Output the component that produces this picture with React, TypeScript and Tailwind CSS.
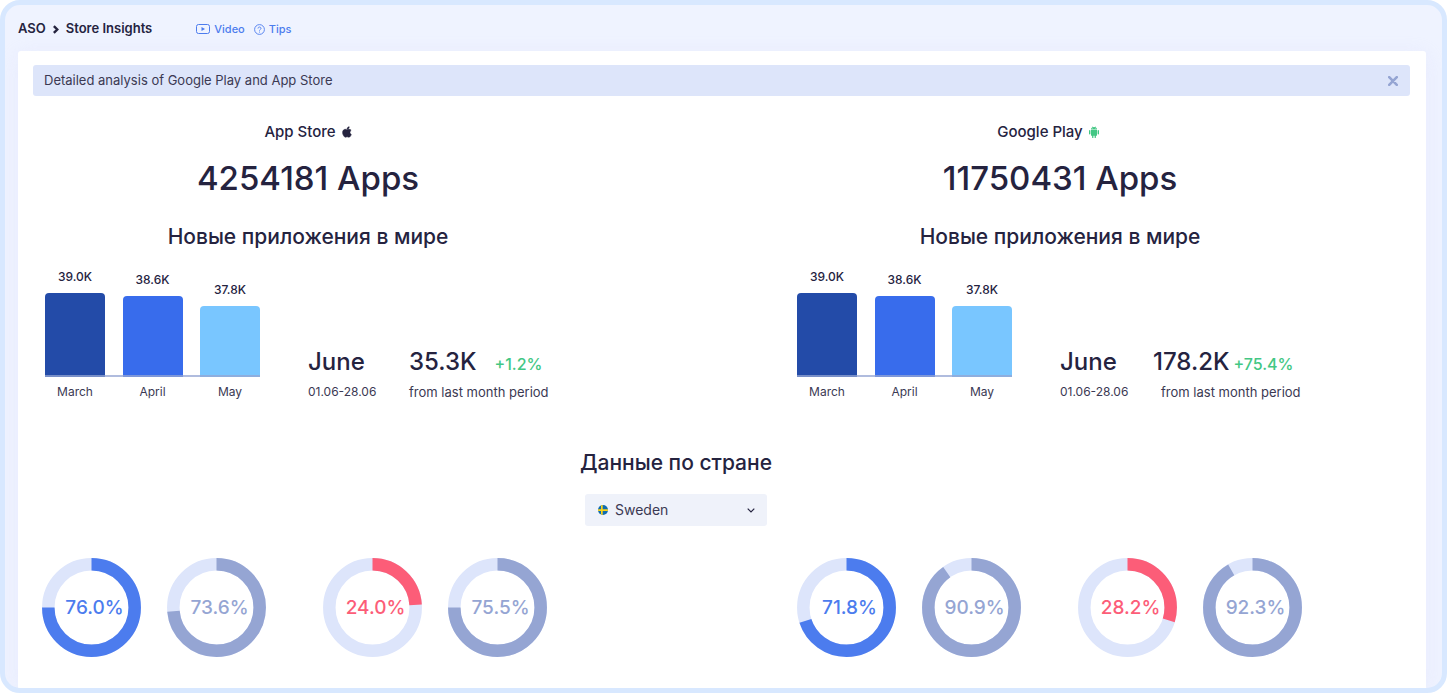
import React from "react";

const MONTHS = [
  { name: "March", value: "39.0K", bar: "h-[84px] bg-[#234ba8]" },
  { name: "April", value: "38.6K", bar: "h-[81px] bg-[#386cec]" },
  { name: "May", value: "37.8K", bar: "h-[71px] bg-[#79c6ff]" },
];

const AppleIcon = () => (
  <svg viewBox="0 0 384 512" className="h-3 w-[10px]" fill="currentColor" aria-hidden="true">
    <path d="M319 269c0-37 16-64 50-84-19-27-47-42-85-45-36-3-75 21-89 21-15 0-50-20-77-20C62 142 4 186 4 275c0 26 5 53 14 81 13 36 58 125 105 123 25-1 42-18 75-18 31 0 48 18 76 18 48-1 89-81 101-118-64-30-56-89-56-92zM262 104c27-32 24-61 23-72-23 1-51 16-66 34-17 20-27 44-25 71 26 2 49-11 68-33z" stroke="currentColor" strokeWidth="24" />
  </svg>
);

const AndroidIcon = () => (
  <svg viewBox="0 0 20 24" className="h-3 w-[10px] text-[#43c784]" fill="currentColor" aria-hidden="true">
    <path d="M4 8h12v10.500a1 1 0 0 1-1 1h-1.200V23a1.300 1.300 0 0 1-2.600 0v-3.500H8.800V23a1.300 1.300 0 0 1-2.600 0v-3.500H5a1 1 0 0 1-1-1z" />
    <path d="M4 7.200C4 5 5 3.600 6.800 2.700L5.700.9l.6-.4 1.200 1.900a7 7 0 0 1 5 0L13.700.5l.6.4-1.100 1.800C15 3.600 16 5 16 7.200zM7.300 5.400a.6.6 0 1 0 0-1.200.6.6 0 0 0 0 1.200zm5.400 0a.6.6 0 1 0 0-1.200.6.6 0 0 0 0 1.200z" fillRule="evenodd" />
    <rect x="0" y="8" width="2.800" height="9" rx="1.400" />
    <rect x="17.200" y="8" width="2.800" height="9" rx="1.400" />
  </svg>
);

const STORES = [
  {
    name: "App Store",
    icon: <AppleIcon />,
    total: "4254181 Apps",
    current: "35.3K",
    growth: "+1.2%",
    headingClass: "",
    numberClass: "gap-[18px]",
    rings: [
      { value: "76.0%", arc: 75, color: "text-[#4c7cee]" },
      { value: "73.6%", arc: 73.6, color: "text-[#95a5d3]" },
      { value: "24.0%", arc: 24, color: "text-[#fc5d78]" },
      { value: "75.5%", arc: 75, color: "text-[#95a5d3]" },
    ],
  },
  {
    name: "Google Play",
    icon: <AndroidIcon />,
    total: "11750431 Apps",
    current: "178.2K",
    growth: "+75.4%",
    headingClass: "pr-6",
    numberClass: "-ml-2 gap-1",
    rings: [
      { value: "71.8%", arc: 70, color: "text-[#4c7cee]" },
      { value: "90.9%", arc: 90.3, color: "text-[#95a5d3]" },
      { value: "28.2%", arc: 29.8, color: "text-[#fc5d78]" },
      { value: "92.3%", arc: 91.8, color: "text-[#95a5d3]" },
    ],
  },
];

type Store = (typeof STORES)[number];

const Header = () => (
  <header className="flex h-[46px] items-center px-[13px] pt-0.5 text-[13px] font-semibold">
    <nav className="flex items-center gap-[7px]" aria-label="Breadcrumb">
      <a href="#aso">ASO</a>
      <svg viewBox="0 0 7 10" className="h-[9px] w-[6px]" fill="none" stroke="currentColor" strokeWidth="2.800" aria-hidden="true">
        <path d="M1 1l4 4-4 4" />
      </svg>
      <a href="#store-insights">Store Insights</a>
    </nav>
    <div className="ml-11 flex items-center gap-[9px] text-[11px] font-medium text-[#4c7cee]">
      <a href="#video" className="flex items-center gap-1">
        <svg viewBox="0 0 14 10" className="h-[10px] w-[14px]" fill="none" stroke="currentColor" aria-hidden="true">
          <rect x=".5" y=".5" width="13" height="9" rx="2" />
          <path d="M5.500 3v4L9 5z" fill="currentColor" stroke="none" />
        </svg>
        Video
      </a>
      <a href="#tips" className="flex items-center gap-1">
        <svg viewBox="0 0 11 11" className="h-[11px] w-[11px]" fill="none" stroke="currentColor" aria-hidden="true">
          <circle cx="5.500" cy="5.500" r="4.900" strokeWidth=".9" />
          <path d="M4 4.500c0-2 3-2 3 0C7 5.500 5.500 5.400 5.500 6.600" strokeWidth=".9" />
          <circle cx="5.500" cy="8" r=".6" fill="currentColor" stroke="none" />
        </svg>
        Tips
      </a>
    </div>
  </header>
);

const Ring = ({ value, arc, color }: Store["rings"][number]) => (
  <div className={`grid size-[99px] place-items-center ${color}`}>
    <svg viewBox="0 0 99 99" className="col-start-1 row-start-1 size-[99px] -rotate-90" fill="none" strokeWidth="12.500" aria-hidden="true">
      <circle cx="49.500" cy="49.500" r="43.200" stroke="#dde5fb" />
      <circle cx="49.500" cy="49.500" r="43.200" stroke="currentColor" pathLength="100" strokeDasharray={`${arc} 100`} />
    </svg>
    <span className="col-start-1 row-start-1 pl-1.5 text-[19px] leading-6 font-medium">{value}</span>
  </div>
);

const StoreColumn = ({ store }: { store: Store }) => (
  <section className="w-[526px]">
    <h2 className={`flex items-center justify-center gap-1.5 text-[15px] leading-5 font-medium ${store.headingClass}`}>
      {store.name}
      {store.icon}
    </h2>
    <p className="mt-4 text-center text-[33px] leading-10 font-medium">{store.total}</p>
    <h3 className="mt-[25px] text-center text-[21px] leading-7 font-medium">Новые приложения в мире</h3>
    <div className="mt-4 flex items-end">
      <div className="w-[215px]">
        <div className="flex h-[110px] items-end justify-between">
          {MONTHS.map((m) => (
            <div key={m.name} className="w-[60px] text-center text-xs font-medium">
              <div className="mb-2">{m.value}</div>
              <div className={`rounded-t ${m.bar}`} />
            </div>
          ))}
        </div>
        <div className="relative -mt-0.5 h-0.5 bg-[#95a5d3]/75" />
        <div className="mt-[7px] flex justify-between text-xs leading-4 text-[#3b3953]">
          {MONTHS.map((m) => (
            <span key={m.name} className="w-[60px] text-center">
              {m.name}
            </span>
          ))}
        </div>
      </div>
      <div className="ml-12 w-[101px]">
        <div className="text-2xl leading-8 font-medium">June</div>
        <div className="mt-1.5 text-xs leading-4 text-[#3b3953]">01.06-28.06</div>
      </div>
      <div>
        <div className={`flex items-baseline text-2xl leading-8 font-medium ${store.numberClass}`}>
          {store.current}
          <span className="text-base text-[#43c784]">{store.growth}</span>
        </div>
        <div className="mt-1.5 text-[13px] leading-4 text-[#3b3953]">from last month period</div>
      </div>
    </div>
  </section>
);

const CountrySelect = () => (
  <div className="relative mt-[17px] w-[182px]">
    <svg viewBox="0 0 10 10" className="pointer-events-none absolute top-[11px] left-[13px] size-[10px]" aria-hidden="true">
      <clipPath id="flag">
        <circle cx="5" cy="5" r="5" />
      </clipPath>
      <g clipPath="url(#flag)">
        <path d="M0 0h10v10H0z" fill="#0f6cb0" />
        <path d="M3 0h1.700v10H3zM0 4.200h10v1.700H0z" fill="#fbd31a" />
      </g>
    </svg>
    <select
      aria-label="Country"
      className="h-8 w-full appearance-none rounded-[3px] bg-[#eff2fa] pl-[30px] text-sm text-[#3b3953]"
    >
      <option>Sweden</option>
    </select>
    <svg viewBox="0 0 8 5" className="pointer-events-none absolute top-[14px] right-3 h-[5px] w-2" fill="none" stroke="currentColor" strokeWidth="1.200" aria-hidden="true">
      <path d="M.7.7L4 4 7.300.7" />
    </svg>
  </div>
);

const App = () => {
  const [showBanner, setShowBanner] = React.useState(true);

  return (
    <div className="flex min-h-screen flex-col overflow-hidden rounded-[20px] border-5 border-[#d8e8ff] bg-[#eff3ff] font-['Inter','Noto_Sans',sans-serif] text-[#25233f]">
      <Header />
      <main className="mr-4 ml-[13px] flex-1 rounded-t-[3px] bg-white px-[15px] pt-[14px] shadow-[0_4px_20px_rgba(215,215,250,0.3)]">
        {showBanner && (
          <div className="mr-px flex h-[31px] items-center justify-between rounded-[3px] bg-[#dde5fa] pr-3 pl-[11px] text-[13px] text-[#3b3953]">
            Detailed analysis of Google Play and App Store
            <button type="button" aria-label="Close" className="text-[#95a5d3]" onClick={() => setShowBanner(false)}>
              <svg viewBox="0 0 10 10" className="size-[10px]" stroke="currentColor" strokeWidth="2.600" strokeLinecap="round" aria-hidden="true">
                <path d="M1.200 1.200l7.600 7.600M8.800 1.200L1.200 8.800" />
              </svg>
            </button>
          </div>
        )}
        <div className="mt-[26px] ml-3 flex max-w-[1278px] justify-between">
          {STORES.map((store) => (
            <StoreColumn key={store.name} store={store} />
          ))}
        </div>
        <div className="mt-[49px] ml-3 flex max-w-[1262px] flex-col items-center">
          <h3 className="text-[21px] leading-7 font-medium">Данные по стране</h3>
          <CountrySelect />
        </div>
        <div className="mt-8 ml-[9px] flex max-w-[1260px] justify-between">
          {STORES.map((store) => (
            <div key={store.name} className="flex gap-[57px]">
              <div className="flex gap-[26px]">
                <Ring {...store.rings[0]} />
                <Ring {...store.rings[1]} />
              </div>
              <div className="flex gap-[26px]">
                <Ring {...store.rings[2]} />
                <Ring {...store.rings[3]} />
              </div>
            </div>
          ))}
        </div>
      </main>
    </div>
  );
};

export default App;
